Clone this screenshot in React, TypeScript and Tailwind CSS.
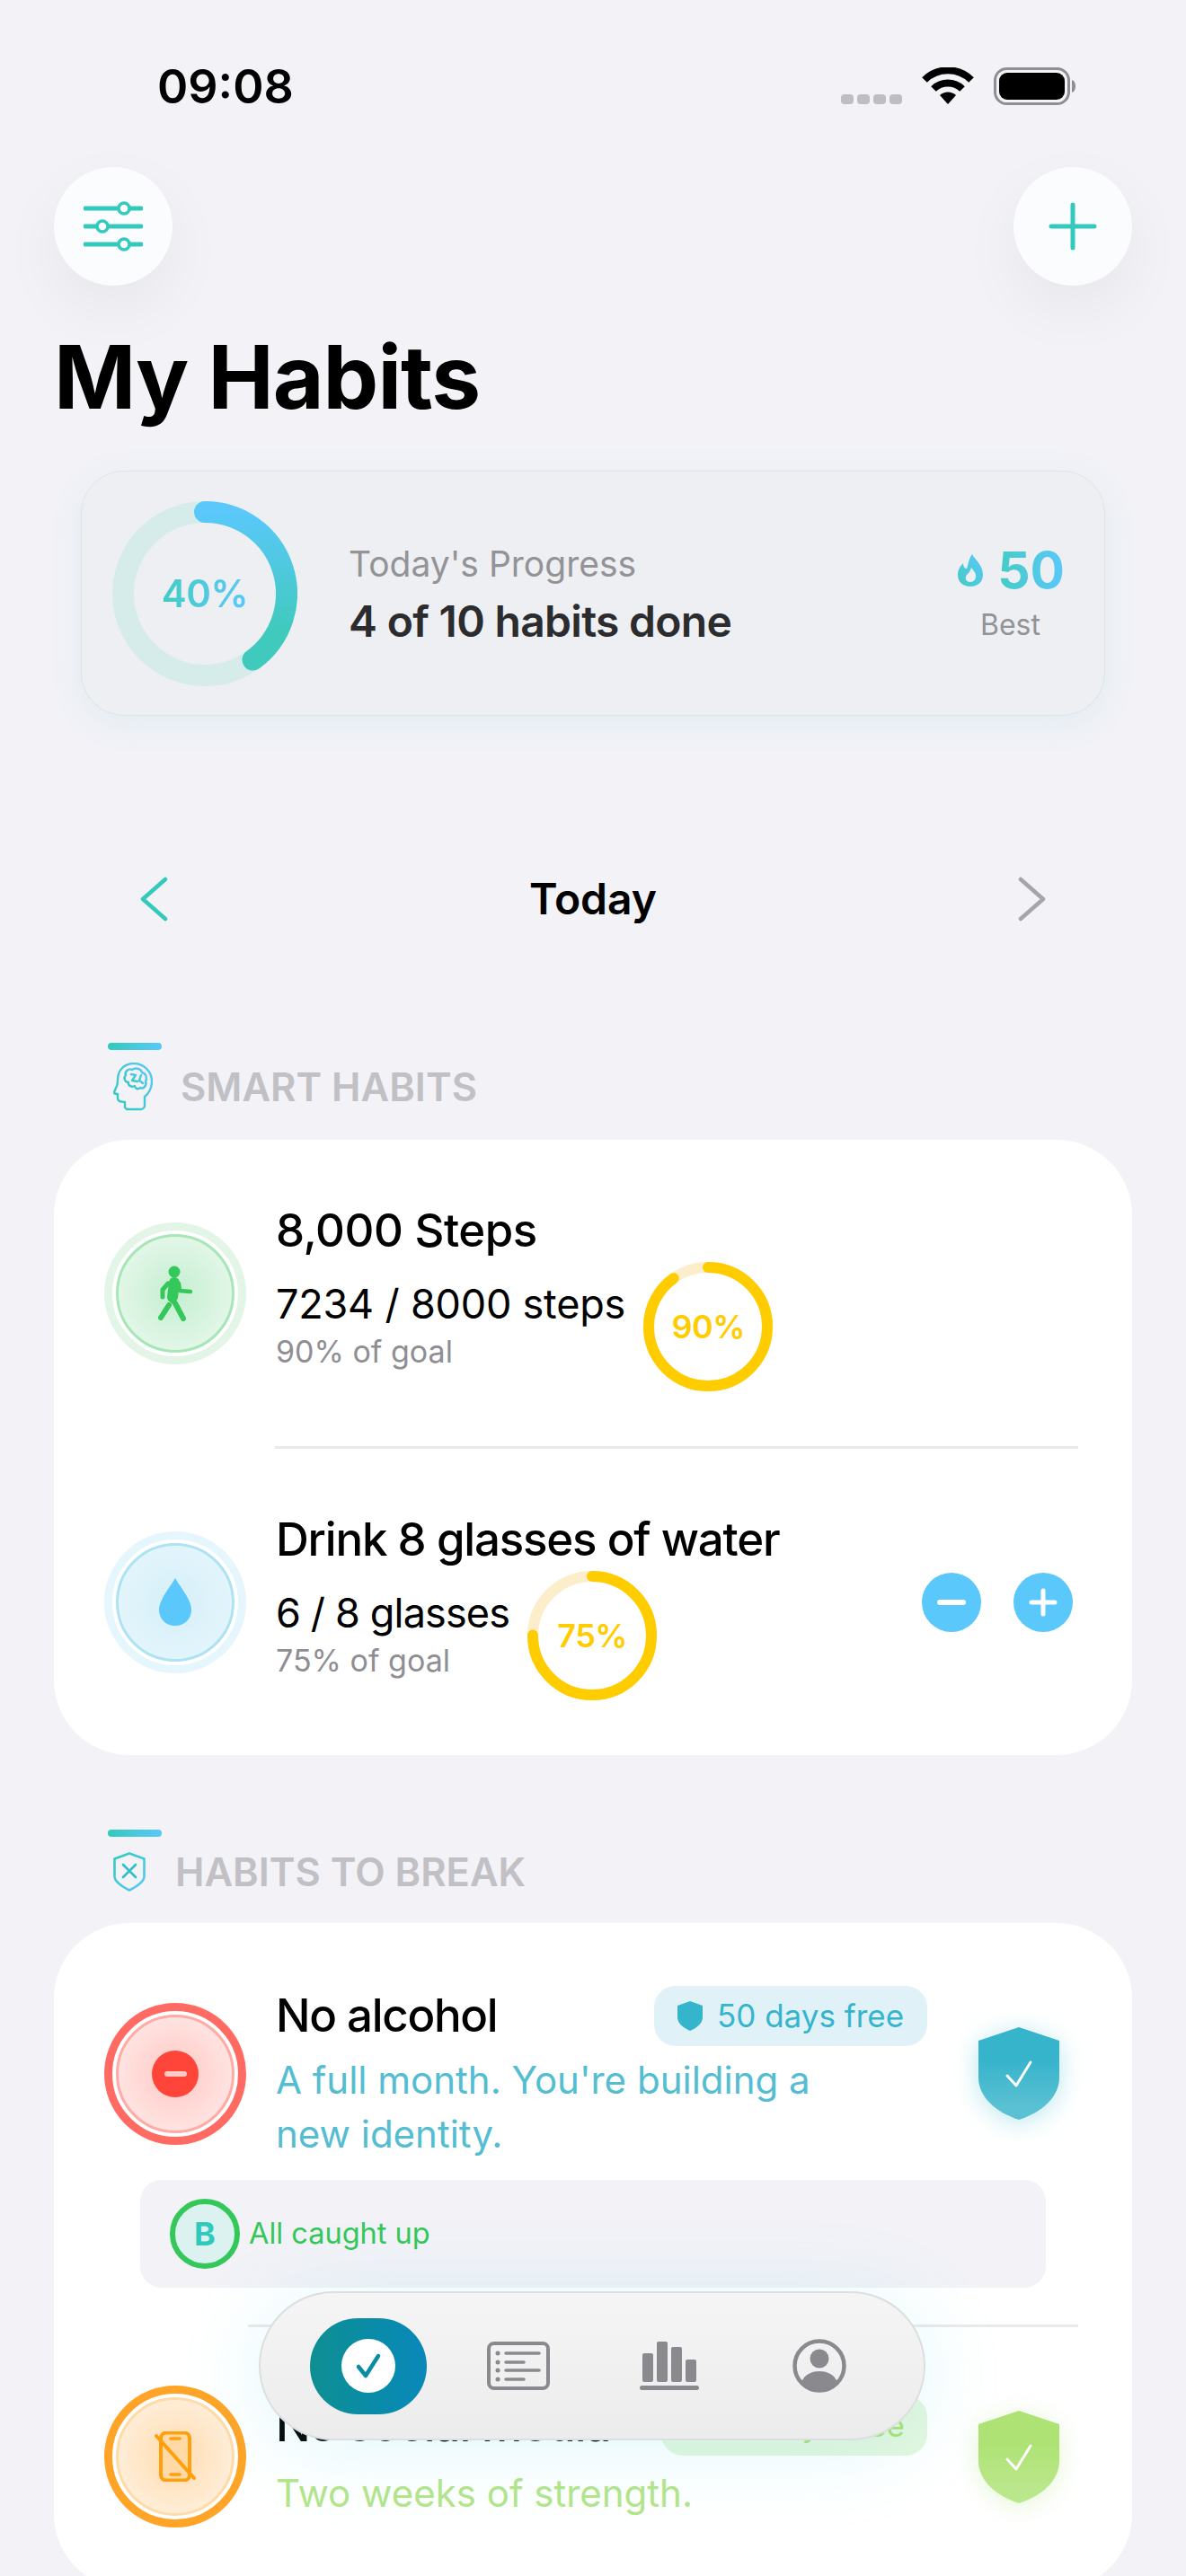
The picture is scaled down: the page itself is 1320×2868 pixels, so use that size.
import React from "react";

const TEAL = "#34c9bd";

function Ring({ pct, size = 144 }: { pct: number; size?: number }) {
  const sw = 12;
  const r = (size - sw) / 2;
  const c = 2 * Math.PI * r;
  return (
    <div className="relative shrink-0 w-[144px] h-[144px] flex items-center justify-center">
      <svg width={size} height={size} className="absolute inset-0 -rotate-90">
        <circle cx={size / 2} cy={size / 2} r={r} fill="none" stroke="#fdeecb" strokeWidth={sw} />
        <circle cx={size / 2} cy={size / 2} r={r} fill="none" stroke="#ffcc00" strokeWidth={sw} strokeLinecap="round" strokeDasharray={`${(c * pct) / 100} ${c}`} />
      </svg>
      <span className="text-[36px] font-semibold text-[#ffcc00] leading-none tracking-[-0.5px]">{pct}%</span>
    </div>
  );
}

function Badge({ outer, ring, fill, children }: { outer: string; ring: string; fill: string; children: React.ReactNode }) {
  return (
    <div className={`shrink-0 w-[158px] h-[158px] rounded-full flex items-center justify-center bg-white ${outer}`}>
      <div className={`w-[132px] h-[132px] rounded-full border-[3px] flex items-center justify-center ${ring} ${fill}`}>{children}</div>
    </div>
  );
}

function Walk() {
  return (
    <svg width="40" height="62" viewBox="0 0 40 62" fill="none" stroke="#34c759" strokeLinecap="round" strokeLinejoin="round">
      <circle cx="19" cy="7" r="6.5" fill="#34c759" stroke="none" />
      <path d="M19 19 L17 35" strokeWidth="12" />
      <path d="M12 20 L6 27 L6 35" strokeWidth="5" />
      <path d="M24 20 L25 28 L37 29" strokeWidth="4.5" />
      <path d="M16 38 L20 42 L29 59" strokeWidth="6" />
      <path d="M13 44 L4 58" strokeWidth="6" />
    </svg>
  );
}

function ShieldCheck({ id, from, to, glow }: { id: string; from: string; to: string; glow: string }) {
  return (
    <div className={`shrink-0 w-[90px] h-[103px] ${glow}`}>
      <svg width="90" height="103" viewBox="0 0 90 103">
        <defs>
          <linearGradient id={id} x1="0" y1="0" x2="0" y2="1">
            <stop offset="0.35" stopColor={from} />
            <stop offset="0.85" stopColor={to} />
          </linearGradient>
        </defs>
        <path d="M45 0 L90 15 V56 C90 78 70 95 45 103 C20 95 0 78 0 56 V15 Z" fill={`url(#${id})`} />
        <path d="M32 54 L42 65 L58 39" fill="none" stroke="#fff" strokeWidth="3" strokeLinecap="round" strokeLinejoin="round" />
      </svg>
    </div>
  );
}

function SectionBar({ children }: { children: React.ReactNode }) {
  return (
    <div className="pl-[120px]">
      <div className="w-[60px] h-[8px] rounded-full bg-gradient-to-r from-[#30c9bb] to-[#5ac8fa]" />
      {children}
    </div>
  );
}

export default function App() {
  return (
    <div className="relative w-[1320px] h-[2868px] overflow-hidden bg-[#f2f2f7] font-['Inter',sans-serif]">
      {/* status bar */}
      <div className="h-[186px] flex justify-between items-start pl-[175px] pr-[122px] pt-[69px]">
        <span className="text-[52px] leading-[56px] font-semibold text-black">09:08</span>
        <div className="flex items-end gap-[22px] pt-[6px]">
          <div className="flex gap-[4px] pb-[1px]">
            <i className="block w-[14px] h-[11px] rounded-[4px] bg-[#bdbdc2]" />
            <i className="block w-[14px] h-[11px] rounded-[4px] bg-[#bdbdc2]" />
            <i className="block w-[14px] h-[11px] rounded-[4px] bg-[#bdbdc2]" />
            <i className="block w-[14px] h-[11px] rounded-[4px] bg-[#bdbdc2]" />
          </div>
          <svg width="58" height="42" viewBox="0 0 58 42" fill="none" stroke="#000" strokeWidth="8">
            <path d="M3 14 A37 37 0 0 1 55 14" />
            <path d="M13 24 A23 23 0 0 1 45 24" />
            <path d="M29 41 L20 31 A13 13 0 0 1 38 31 Z" fill="#000" stroke="none" />
          </svg>
          <svg width="92" height="42" viewBox="0 0 92 42">
            <rect x="1.5" y="1.5" width="82" height="39" rx="13" fill="none" stroke="#8e8e93" strokeWidth="3" />
            <rect x="6" y="6" width="73" height="30" rx="9" fill="#000" />
            <path d="M87 14 C90 15 91 18 91 21 C91 24 90 27 87 28 Z" fill="#8e8e93" />
          </svg>
        </div>
      </div>

      {/* header buttons */}
      <div className="flex justify-between px-[60px]">
        <div className="w-[132px] h-[132px] rounded-full bg-[#fbfcfe] flex items-center justify-center shadow-[0_26px_70px_rgba(0,0,0,0.05)]">
          <svg width="66" height="56" viewBox="0 0 66 56" fill="none" stroke={TEAL}>
            <path d="M2 8 H64 M2 28 H64 M2 48 H64" strokeWidth="5" strokeLinecap="round" />
            <circle cx="45" cy="8" r="6" fill="#fbfcfe" strokeWidth="3.5" />
            <circle cx="21" cy="28" r="6" fill="#fbfcfe" strokeWidth="3.5" />
            <circle cx="45" cy="48" r="6" fill="#fbfcfe" strokeWidth="3.5" />
          </svg>
        </div>
        <div className="w-[132px] h-[132px] rounded-full bg-[#fbfcfe] flex items-center justify-center shadow-[0_26px_70px_rgba(0,0,0,0.05)]">
          <svg width="54" height="54" viewBox="0 0 54 54" fill="none" stroke={TEAL} strokeWidth="5" strokeLinecap="round">
            <path d="M27 3 V51 M3 27 H51" />
          </svg>
        </div>
      </div>

      <h1 className="mt-[47px] px-[60px] text-[98px] leading-[110px] font-bold text-black tracking-[-1px]">My Habits</h1>

      {/* progress card */}
      <div className="mt-[49px] mx-[90px] h-[273px] rounded-[48px] border border-[#dfe4e7] bg-[#edeff2] shadow-[0_8px_36px_rgba(90,200,210,0.1)] flex items-center pl-[34px] pr-[44px]">
        <div className="relative w-[206px] h-[206px] shrink-0 flex items-center justify-center">
          <svg width="206" height="206" className="absolute inset-0">
            <defs>
              <linearGradient id="pg" x1="0" y1="0" x2="0" y2="1">
                <stop offset="0" stopColor="#5ac8fa" />
                <stop offset="0.8" stopColor="#40cabd" />
              </linearGradient>
            </defs>
            <circle cx="103" cy="103" r="91" fill="none" stroke="#d5ecea" strokeWidth="24" />
            <path d="M103 12 A91 91 0 0 1 156.5 176.6" fill="none" stroke="url(#pg)" strokeWidth="24" strokeLinecap="round" />
          </svg>
          <span className="text-[42px] font-semibold leading-none tracking-[-0.5px] text-transparent bg-clip-text bg-gradient-to-r from-[#45cbc4] to-[#5ac8fa]">40%</span>
        </div>
        <div className="ml-[57px] flex-1">
          <div className="text-[39px] leading-[52px] text-[#939397]">Today's Progress</div>
          <div className="mt-[10px] text-[48px] leading-[56px] font-semibold text-[#2c2c2e] tracking-[-0.7px]">4 of 10 habits done</div>
        </div>
        <div className="flex flex-col items-end">
          <div className="flex items-center gap-[15px]">
            <svg width="30" height="36" viewBox="0 0 30 36">
              <defs>
                <linearGradient id="fl" x1="0" y1="1" x2="1" y2="0">
                  <stop offset="0" stopColor="#45cbc4" />
                  <stop offset="1" stopColor="#5ac8fa" />
                </linearGradient>
              </defs>
              <path fillRule="evenodd" fill="url(#fl)" d="M17 0 C20 6 29 12 29 23 C29 31 23 36 15 36 C7 36 1 31 1 23 C1 17 4 13 7 10 C7 14 9 16 11 16 C13 11 13 5 17 0 Z M15 31 C19 31 21 28 21 24 C21 20 18 18 16 15 C15 19 13 21 11 23 C9 25 9 31 15 31 Z" />
            </svg>
            <span className="text-[57px] leading-[60px] font-bold text-transparent bg-clip-text bg-gradient-to-r from-[#45cbc4] to-[#5ac8fa]">50</span>
          </div>
          <div className="mt-[11px] w-[64px] mr-[30px] text-center text-[32px] leading-[40px] text-[#939397]">Best</div>
        </div>
      </div>

      {/* date nav */}
      <div className="mt-[154px] h-[100px] px-[155px] flex items-center justify-between">
        <svg width="32" height="50" viewBox="0 0 32 50" fill="none" stroke={TEAL} strokeWidth="4.5" strokeLinecap="round" strokeLinejoin="round">
          <path d="M29 3 L4 25 L29 47" />
        </svg>
        <span className="text-[48px] font-semibold text-black">Today</span>
        <svg width="32" height="50" viewBox="0 0 32 50" fill="none" stroke="#a5a5aa" strokeWidth="4.5" strokeLinecap="round" strokeLinejoin="round">
          <path d="M3 3 L28 25 L3 47" />
        </svg>
      </div>

      {/* smart habits */}
      <div className="mt-[110px]">
        <SectionBar>
          <div className="mt-[14px] pl-[6px] flex items-center gap-[31px]">
            <svg width="44" height="54" viewBox="0 0 44 54" fill="none" strokeWidth="2.4" strokeLinecap="round" strokeLinejoin="round" stroke="url(#br)">
              <defs>
                <linearGradient id="br" x1="0" y1="1" x2="1" y2="0">
                  <stop offset="0" stopColor="#30c9bb" />
                  <stop offset="1" stopColor="#5ac8fa" />
                </linearGradient>
              </defs>
              <path d="M15 52 H31 C33 52 35 50 35 48 V38 C40 34 43 28 43 21 C43 10 34 1 23 1 C12 1 5 9 5 19 C5 22 5 24 4 26 L1 33 C1 35 3 35 5 35 V40 C5 43 8 44 13 44 V50 Z" />
              <path d="M14 14 C12 10 18 6 21 8 C25 5 31 7 32 11 C37 12 38 18 36 21 C38 26 33 30 30 28 C27 31 24 28 24 26 C20 28 16 25 17 22 C13 22 11 17 14 14 Z" />
              <path d="M20 13 L25 14 L21 20 L27 21 M31 14 L29 20 L33 23" />
            </svg>
            <span className="text-[43.5px] leading-[54px] font-semibold text-[#c0c0c5]">SMART HABITS</span>
          </div>
        </SectionBar>

        <div className="mt-[32px] mx-[60px] rounded-[84px] bg-white">
          <div className="h-[341px] flex items-center pl-[56px]">
            <Badge outer="border-[9px] border-[#e3f5e6]" ring="border-[#a8e6b8]" fill="bg-[radial-gradient(circle,#c4eed0,#eefaf1)]">
              <Walk />
            </Badge>
            <div className="ml-[33px] mt-[9px]">
              <div className="text-[51px] leading-[60px] font-[550] tracking-[-0.5px] text-black">8,000 Steps</div>
              <div className="mt-[5px] flex items-center">
                <div>
                  <div className="text-[45px] leading-[52px] text-black tracking-[-0.2px]">7234 / 8000 steps</div>
                  <div className="mt-[5px] text-[34px] leading-[44px] text-[#8e8e93]">90% of goal</div>
                </div>
                <div className="ml-[20px]"><Ring pct={90} /></div>
              </div>
            </div>
          </div>
          <div className="ml-[246px] mr-[60px] h-[3px] bg-[#e9e9ec]" />
          <div className="h-[341px] flex items-center pl-[56px] pr-[66px]">
            <Badge outer="border-[9px] border-[#e5f6fd]" ring="border-[#ade3f2]" fill="bg-[radial-gradient(circle,#d5eff9,#e9f7fc)]">
              <svg width="38" height="54" viewBox="0 0 38 54"><path d="M19 0 C24 9 37 24 37 35 C37 46 29 53 19 53 C9 53 1 46 1 35 C1 24 14 9 19 0 Z" fill="#5ac8fa" /></svg>
            </Badge>
            <div className="ml-[33px] mt-[9px] flex-1">
              <div className="text-[51px] leading-[60px] font-[550] tracking-[-1.2px] text-black">Drink 8 glasses of water</div>
              <div className="mt-[5px] flex items-center">
                <div>
                  <div className="text-[45px] leading-[52px] text-black tracking-[-0.85px]">6 / 8 glasses</div>
                  <div className="mt-[5px] text-[34px] leading-[44px] text-[#8e8e93]">75% of goal</div>
                </div>
                <div className="ml-[20px]"><Ring pct={75} /></div>
              </div>
            </div>
            <div className="flex gap-[36px]">
              <div className="w-[66px] h-[66px] rounded-full bg-[#5ac8fa] flex items-center justify-center">
                <div className="w-[32px] h-[6px] rounded-full bg-white" />
              </div>
              <div className="w-[66px] h-[66px] rounded-full bg-[#5ac8fa] flex items-center justify-center">
                <svg width="32" height="32" viewBox="0 0 32 32" stroke="#fff" strokeWidth="5" strokeLinecap="round"><path d="M16 3 V29 M3 16 H29" /></svg>
              </div>
            </div>
          </div>
        </div>
      </div>

      {/* habits to break */}
      <div className="mt-[83px]">
        <SectionBar>
          <div className="mt-[17px] pl-[6px] flex items-center gap-[33px]">
            <svg width="36" height="44" viewBox="0 0 36 44" fill="none" strokeWidth="2.6" strokeLinecap="round" strokeLinejoin="round" stroke="url(#sh)">
              <defs>
                <linearGradient id="sh" x1="0" y1="0" x2="1" y2="1">
                  <stop offset="0" stopColor="#30c9bb" />
                  <stop offset="1" stopColor="#5ac8fa" />
                </linearGradient>
              </defs>
              <path d="M18 1.5 L34.5 7.5 V27 C34.5 33 27 38 18 42.5 C9 38 1.5 33 1.5 27 V7.5 Z" />
              <path d="M11 14 L25 28 M25 14 L11 28" stroke="#30bfc8" />
            </svg>
            <span className="text-[43.5px] leading-[44px] font-semibold text-[#c0c0c5]">HABITS TO BREAK</span>
          </div>
        </SectionBar>

        <div className="mt-[35px] mx-[60px] rounded-[84px] bg-white pt-[70px] pb-[69px]">
          <div className="flex items-center pl-[56px] pr-[81px]">
            <Badge outer="border-[9px] border-[#ff6b63]" ring="border-[#ffaaa4]" fill="bg-[radial-gradient(circle,#ffc8c3,#ffeeed)]">
              <div className="w-[52px] h-[52px] rounded-full bg-[#ff453a] flex items-center justify-center">
                <div className="w-[25px] h-[6px] rounded-full bg-[#ffc9c5]" />
              </div>
            </Badge>
            <div className="ml-[33px] w-[725px]">
              <div className="h-[67px] flex items-center justify-between">
                <span className="text-[51px] font-[550] tracking-[-1.3px] text-black">No alcohol</span>
                <div className="h-[67px] w-[304px] rounded-[24px] bg-[#e0f2f7] flex items-center justify-center gap-[16px]">
                  <svg width="28" height="33" viewBox="0 0 28 33"><path d="M14 0 L28 5 V18 C28 25 21 30 14 33 C7 30 0 25 0 18 V5 Z" fill="#35b5cc" /></svg>
                  <span className="text-[35px] text-[#35b5cc]">50 days free</span>
                </div>
              </div>
              <div className="mt-[8px] w-[620px] text-[42px] leading-[60px] text-[#55bdd1]">A full month. You're building a new identity.</div>
            </div>
            <div className="ml-[57px]">
              <ShieldCheck id="s1" from="#36b4cb" to="#5ac0d3" glow="drop-shadow-[0_4px_14px_rgba(60,185,210,0.35)]" />
            </div>
          </div>

          <div className="mt-[21px] mx-[96px] h-[120px] rounded-[24px] bg-[#f2f2f7] flex items-center pl-[33px]">
            <div className="w-[78px] h-[78px] rounded-full border-[6px] border-[#34c759] bg-[#dcf2f0] flex items-center justify-center">
              <span className="text-[36px] font-bold text-[#30c9bb] leading-none">B</span>
            </div>
            <span className="ml-[10px] text-[32.5px] text-[#34c759]">All caught up</span>
          </div>

          <div className="mt-[41px] ml-[216px] mr-[60px] h-[3px] bg-[#e9e9ec]" />

          <div className="mt-[65px] flex items-center pl-[56px] pr-[81px]">
            <Badge outer="border-[9px] border-[#ffa426]" ring="border-[#ffdba8]" fill="bg-[radial-gradient(circle,#ffdcb0,#fff4e6)]">
              <svg width="46" height="56" viewBox="0 0 46 56" fill="none" stroke="#ff9f0a">
                <rect x="7" y="1.5" width="32" height="53" rx="6" fill="#ffd9a6" strokeWidth="4" />
                <path d="M18 8 H28 M18 48 H28" strokeWidth="3.5" strokeLinecap="round" />
                <path d="M2 5 L44 52" strokeWidth="4" strokeLinecap="round" />
              </svg>
            </Badge>
            <div className="ml-[33px] w-[725px] pt-[3px]">
              <div className="h-[67px] flex items-center justify-between">
                <span className="text-[51px] font-[550] tracking-[-1px] text-black">No social media</span>
                <div className="h-[67px] w-[296px] rounded-[24px] bg-[#e4f7de] flex items-center justify-center gap-[16px]">
                  <svg width="28" height="33" viewBox="0 0 28 33"><path d="M14 0 L28 5 V18 C28 25 21 30 14 33 C7 30 0 25 0 18 V5 Z" fill="#a8e070" /></svg>
                  <span className="text-[35px] text-[#a8e070]">14 days free</span>
                </div>
              </div>
              <div className="mt-[12px] w-[620px] text-[42px] leading-[60px] text-[#b4e58a]">Two weeks of strength.</div>
            </div>
            <div className="ml-[57px]">
              <ShieldCheck id="s2" from="#aee274" to="#bbe78c" glow="drop-shadow-[0_4px_14px_rgba(170,225,120,0.3)]" />
            </div>
          </div>
        </div>
      </div>

      {/* floating tab bar */}
      <div className="absolute left-[288px] top-[2551px] w-[742px] h-[166px] rounded-[83px] border-[2px] border-[#dcdfe0] bg-gradient-to-b from-[#f5f5f5] to-[#ececec] shadow-[0_10px_90px_rgba(90,215,235,0.18)] grid grid-cols-4 items-center pl-[36px] pr-[32px]">
        <div className="flex justify-center">
          <div className="w-[130px] h-[107px] rounded-[54px] bg-gradient-to-r from-[#0f8f92] to-[#0a88ba] flex items-center justify-center">
            <div className="w-[60px] h-[60px] rounded-full bg-white flex items-center justify-center">
              <svg width="30" height="30" viewBox="0 0 30 30" fill="none" stroke="#0c8ca4" strokeWidth="4.5" strokeLinecap="round" strokeLinejoin="round"><path d="M4 16 L12 26 L26 4" /></svg>
            </div>
          </div>
        </div>
        <div className="flex justify-center">
          <svg width="70" height="54" viewBox="0 0 70 54" fill="none" stroke="#8a8a8e">
            <rect x="2" y="2" width="66" height="50" rx="6" strokeWidth="4" />
            <path d="M21 13 H58 M21 23 H41 M21 32 H58 M21 42 H41" strokeWidth="3.5" strokeLinecap="round" />
            <path d="M12 13 H12.1 M12 23 H12.1 M12 32 H12.1 M12 42 H12.1" strokeWidth="5" strokeLinecap="round" />
          </svg>
        </div>
        <div className="flex justify-center">
          <svg width="66" height="56" viewBox="0 0 66 56" fill="#8a8a8e">
            <rect x="3" y="14" width="12" height="32" rx="2" />
            <rect x="19" y="1" width="12" height="45" rx="2" />
            <rect x="35" y="7" width="12" height="39" rx="2" />
            <rect x="51" y="21" width="12" height="25" rx="2" />
            <rect x="0" y="50" width="66" height="5" rx="2.5" />
          </svg>
        </div>
        <div className="flex justify-center">
          <svg width="60" height="60" viewBox="0 0 60 60">
            <circle cx="30" cy="30" r="27.5" fill="none" stroke="#8a8a8e" strokeWidth="4.5" />
            <circle cx="30" cy="22" r="10.5" fill="#8a8a8e" />
            <path d="M10 48 C14 39 22 36 30 36 C38 36 46 39 50 48 C45 54 38 57 30 57 C22 57 15 54 10 48 Z" fill="#8a8a8e" />
          </svg>
        </div>
      </div>
    </div>
  );
}
